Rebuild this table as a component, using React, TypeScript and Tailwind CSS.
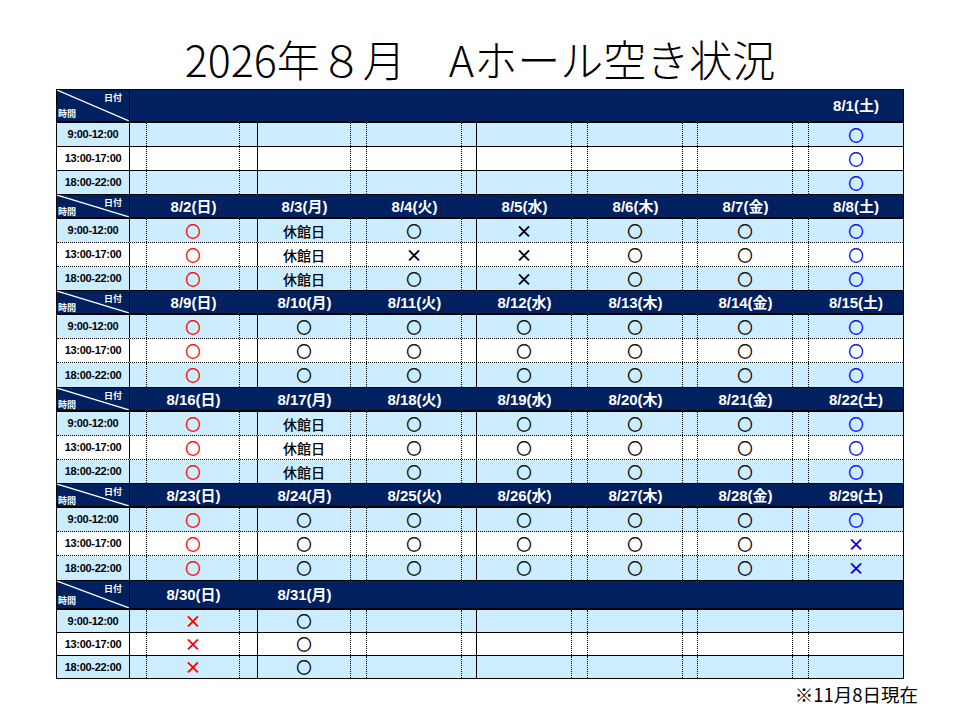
import React from "react";

type Mark = "o" | "x" | "k" | "";

// column widths + right border style (label, then spacer/day pairs Sun..Sat)
const COL = [
  "w-[73px] shrink-0 border-r border-solid border-black",
  "w-[17px] shrink-0 border-r border-dotted border-black",
  "w-[93px] shrink-0 border-r border-dotted border-black",
  "w-[18px] shrink-0 border-r border-solid border-black",
  "w-[93px] shrink-0 border-r border-dotted border-black",
  "w-[16px] shrink-0 border-r border-dotted border-black",
  "w-[95px] shrink-0 border-r border-dotted border-black",
  "w-[15px] shrink-0 border-r border-solid border-black",
  "w-[95px] shrink-0 border-r border-dotted border-black",
  "w-[16px] shrink-0 border-r border-dotted border-black",
  "w-[95px] shrink-0 border-r border-dotted border-black",
  "w-[15px] shrink-0 border-r border-dotted border-black",
  "w-[95px] shrink-0 border-r border-dotted border-black",
  "w-[16px] shrink-0 border-r border-dotted border-black",
  "w-[94px] shrink-0",
];

// same widths, no lines (header rows)
const HCOL = [
  "w-[73px] shrink-0",
  "w-[17px] shrink-0",
  "w-[93px] shrink-0",
  "w-[18px] shrink-0",
  "w-[93px] shrink-0",
  "w-[16px] shrink-0",
  "w-[95px] shrink-0",
  "w-[15px] shrink-0",
  "w-[95px] shrink-0",
  "w-[16px] shrink-0",
  "w-[95px] shrink-0",
  "w-[15px] shrink-0",
  "w-[95px] shrink-0",
  "w-[16px] shrink-0",
  "w-[94px] shrink-0",
];

const TIMES = ["9:00-12:00", "13:00-17:00", "18:00-22:00"];

const SOLID = "border-b border-solid border-black";
const DOTTED = "border-b border-dotted border-black";

interface Week {
  dates: string[];
  rows: Mark[][];
  headerH: string;
  rowH: string[];
  seps: string[];
}

const WEEKS: Week[] = [
  {
    dates: ["", "", "", "", "", "", "8/1(土)"],
    rows: [
      ["", "", "", "", "", "", "o"],
      ["", "", "", "", "", "", "o"],
      ["", "", "", "", "", "", "o"],
    ],
    headerH: "h-[33px]",
    rowH: ["h-[24px]", "h-[24px]", "h-[24px]"],
    seps: [SOLID, SOLID, SOLID],
  },
  {
    dates: ["8/2(日)", "8/3(月)", "8/4(火)", "8/5(水)", "8/6(木)", "8/7(金)", "8/8(土)"],
    rows: [
      ["o", "k", "o", "x", "o", "o", "o"],
      ["o", "k", "x", "x", "o", "o", "o"],
      ["o", "k", "o", "x", "o", "o", "o"],
    ],
    headerH: "h-[24px]",
    rowH: ["h-[24px]", "h-[24px]", "h-[24px]"],
    seps: [DOTTED, DOTTED, SOLID],
  },
  {
    dates: ["8/9(日)", "8/10(月)", "8/11(火)", "8/12(水)", "8/13(木)", "8/14(金)", "8/15(土)"],
    rows: [
      ["o", "o", "o", "o", "o", "o", "o"],
      ["o", "o", "o", "o", "o", "o", "o"],
      ["o", "o", "o", "o", "o", "o", "o"],
    ],
    headerH: "h-[24px]",
    rowH: ["h-[24px]", "h-[24px]", "h-[25px]"],
    seps: [DOTTED, DOTTED, SOLID],
  },
  {
    dates: ["8/16(日)", "8/17(月)", "8/18(火)", "8/19(水)", "8/20(木)", "8/21(金)", "8/22(土)"],
    rows: [
      ["o", "k", "o", "o", "o", "o", "o"],
      ["o", "k", "o", "o", "o", "o", "o"],
      ["o", "k", "o", "o", "o", "o", "o"],
    ],
    headerH: "h-[24px]",
    rowH: ["h-[24px]", "h-[24px]", "h-[24px]"],
    seps: [DOTTED, DOTTED, SOLID],
  },
  {
    dates: ["8/23(日)", "8/24(月)", "8/25(火)", "8/26(水)", "8/27(木)", "8/28(金)", "8/29(土)"],
    rows: [
      ["o", "o", "o", "o", "o", "o", "o"],
      ["o", "o", "o", "o", "o", "o", "x"],
      ["o", "o", "o", "o", "o", "o", "x"],
    ],
    headerH: "h-[24px]",
    rowH: ["h-[24px]", "h-[24px]", "h-[25px]"],
    seps: [DOTTED, DOTTED, SOLID],
  },
  {
    dates: ["8/30(日)", "8/31(月)", "", "", "", "", ""],
    rows: [
      ["x", "o", "", "", "", "", ""],
      ["x", "o", "", "", "", "", ""],
      ["x", "o", "", "", "", "", ""],
    ],
    headerH: "h-[29px]",
    rowH: ["h-[23px]", "h-[23px]", "h-[22px]"],
    seps: [SOLID, SOLID, ""],
  },
];

const dayColor = (d: number) =>
  d === 0 ? "text-[#ff0000]" : d === 6 ? "text-[#0000ff]" : "text-black";

const MarkCell: React.FC<{ mark: Mark; day: number }> = ({ mark, day }) => {
  if (mark === "o") {
    return (
      <span
        className={`font-['Noto_Sans_CJK_JP'] text-[15px] font-bold leading-[16px] [-webkit-text-stroke:0.5px_currentColor] ${dayColor(day)}`}
      >
        ○
      </span>
    );
  }
  if (mark === "x") {
    return (
      <span className={`font-['Noto_Sans_CJK_JP'] text-[17px] font-bold leading-[16px] ${dayColor(day)}`}>
        ×
      </span>
    );
  }
  if (mark === "k") {
    return (
      <span className="font-['Noto_Sans_CJK_JP'] text-[14px] font-medium leading-[16px] text-black">
        休館日
      </span>
    );
  }
  return null;
};

const CornerCell: React.FC = () => (
  <div className={`${COL[0]} relative flex flex-col justify-between pt-[4px] pb-[2px] pl-[1px] pr-[7px]`}>
    <svg
      className="absolute inset-0 h-full w-full"
      viewBox="0 0 100 100"
      preserveAspectRatio="none"
    >
      <line x1="0" y1="0" x2="100" y2="100" stroke="white" strokeWidth="1.2" vectorEffect="non-scaling-stroke" />
    </svg>
    <span className="relative self-end text-[9px] font-bold leading-none">日付</span>
    <span className="relative self-start text-[9px] font-bold leading-none">時間</span>
  </div>
);

const WeekBlock: React.FC<{ week: Week }> = ({ week }) => (
  <>
    <div className={`flex ${week.headerH} bg-[#002060] border-b-2 border-solid border-black text-white`}>
      <CornerCell />
      {week.dates.map((date, d) => (
        <React.Fragment key={d}>
          <div className={HCOL[1 + d * 2]} />
          <div className={`${HCOL[2 + d * 2]} flex items-center justify-center text-[15px] font-bold leading-none`}>
            {date}
          </div>
        </React.Fragment>
      ))}
    </div>
    {week.rows.map((row, r) => (
      <div
        key={r}
        className={`flex ${week.rowH[r]} ${r === 1 ? "bg-white" : "bg-[#ccecff]"} ${week.seps[r]}`}
      >
        <div className={`${COL[0]} flex items-center justify-center font-['Liberation_Sans'] text-[11px] font-bold leading-none tracking-[-0.3px]`}>
          {TIMES[r]}
        </div>
        {row.map((mark, d) => (
          <React.Fragment key={d}>
            <div className={COL[1 + d * 2]} />
            <div className={`${COL[2 + d * 2]} flex items-center justify-center`}>
              <MarkCell mark={mark} day={d} />
            </div>
          </React.Fragment>
        ))}
      </div>
    ))}
  </>
);

export default function App() {
  return (
    <div className="relative h-[720px] w-[960px] bg-white font-['Liberation_Sans','Noto_Sans_CJK_JP',sans-serif] text-black">
      <div className="flex h-[89px] items-start justify-center pt-[35px]">
        <h1 className="font-['Noto_Sans_CJK_JP',sans-serif] text-[43px] font-light leading-[46px]">
          2026年８月　Aホール空き状況
        </h1>
      </div>
      <div className="ml-[56px] flex w-[848px] flex-col border border-solid border-black">
        {WEEKS.map((w, i) => (
          <WeekBlock key={i} week={w} />
        ))}
      </div>
      <div className="mt-[3px] pr-[42px] text-right font-['Noto_Sans_CJK_JP',sans-serif] text-[18.5px] font-normal leading-[24px]">
        ※11月8日現在
      </div>
    </div>
  );
}
